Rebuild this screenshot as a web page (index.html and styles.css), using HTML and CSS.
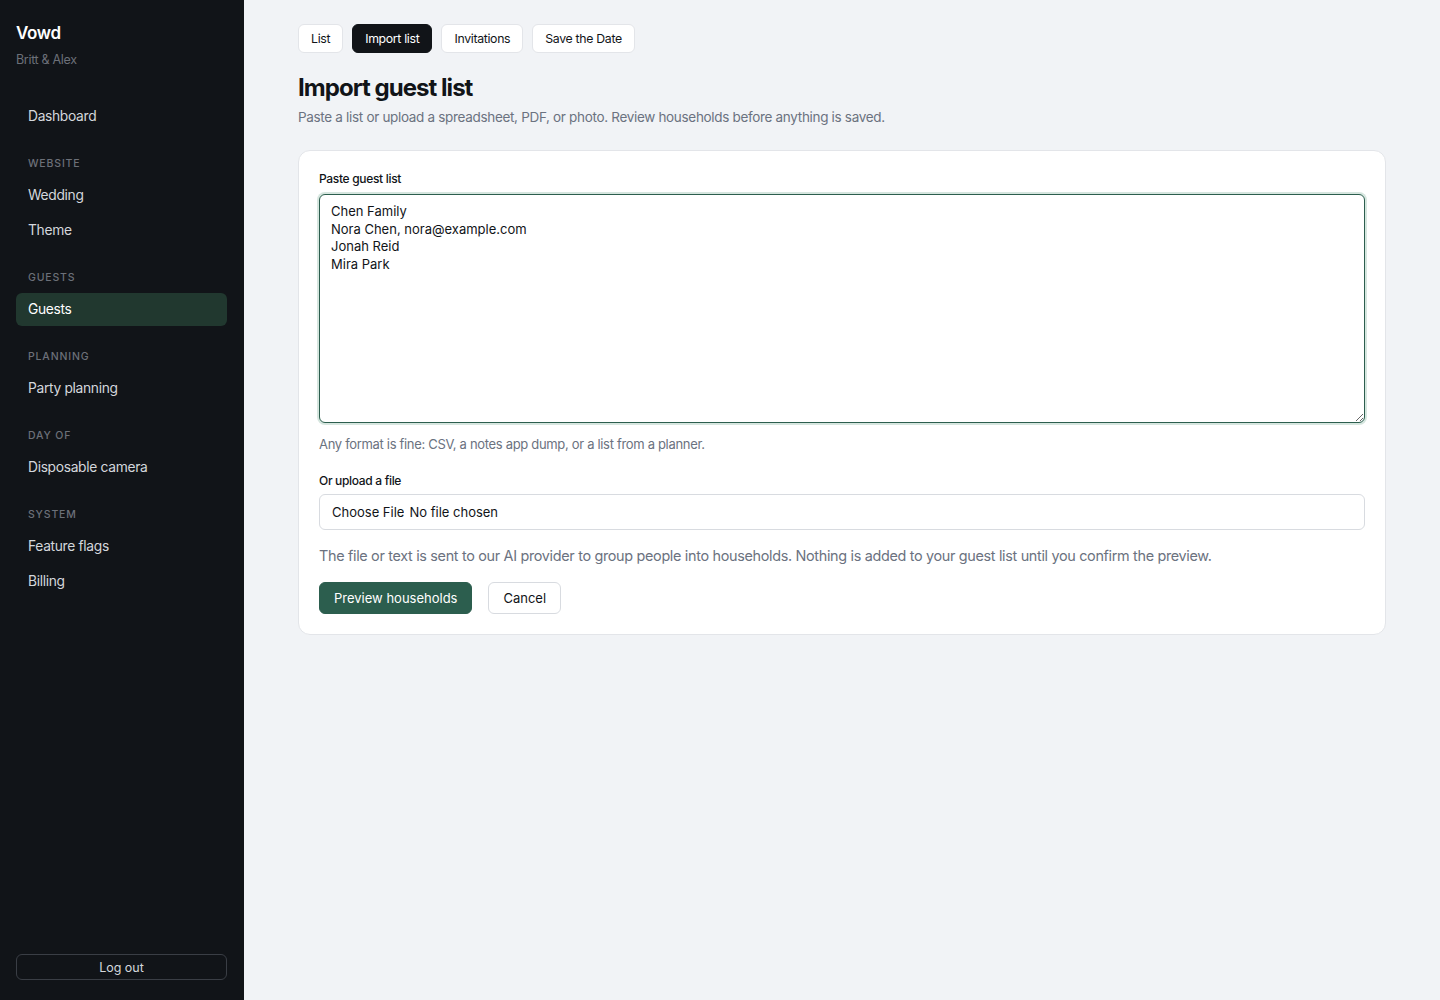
FILE: index.html
```html
<!DOCTYPE html>
<html lang="en">
  <head>
    <meta charset="UTF-8" />
    <title>Import guest list · Vowd</title>
    <meta name="viewport" content="width=device-width, initial-scale=1" />
    <link rel="stylesheet" href="styles.css">
  </head>
  <body>
    <div class="shell">
      <aside class="sidebar">
        <div class="brand">
          <div class="brand-name">Vowd</div>
          <div class="brand-sub">Britt &amp; Alex</div>
        </div>

        <nav class="nav">
          <a class="nav-item" href="#">Dashboard</a>

          <div class="nav-group">
            <div class="nav-label">Website</div>
            <a class="nav-item" href="#">Wedding</a>
            <a class="nav-item" href="#">Theme</a>
          </div>

          <div class="nav-group">
            <div class="nav-label">Guests</div>
            <a class="nav-item active" href="#">Guests</a>
          </div>

          <div class="nav-group">
            <div class="nav-label">Planning</div>
            <a class="nav-item" href="#">Party planning</a>
          </div>

          <div class="nav-group">
            <div class="nav-label">Day of</div>
            <a class="nav-item" href="#">Disposable camera</a>
          </div>

          <div class="nav-group">
            <div class="nav-label">System</div>
            <a class="nav-item" href="#">Feature flags</a>
            <a class="nav-item" href="#">Billing</a>
          </div>
        </nav>

        <button class="logout">Log out</button>
      </aside>

      <main class="main">
        <div class="tabs">
          <a class="tab" href="#">List</a>
          <a class="tab current" href="#">Import list</a>
          <a class="tab" href="#">Invitations</a>
          <a class="tab" href="#">Save the Date</a>
        </div>

        <h1>Import guest list</h1>
        <p class="lead">
          Paste a list or upload a spreadsheet, PDF, or photo. Review households before anything is saved.
        </p>

        <form class="card">
          <label class="field-label" for="guestText">Paste guest list</label>
          <textarea id="guestText" class="paste" autofocus>Chen Family
Nora Chen, nora@example.com
Jonah Reid
Mira Park</textarea>
          <p class="hint">Any format is fine: CSV, a notes app dump, or a list from a planner.</p>

          <label class="field-label upload-label" for="guestFile">Or upload a file</label>
          <input id="guestFile" class="file" type="file" />

          <p class="note">
            The file or text is sent to our AI provider to group people into households. Nothing is added to your guest list until you confirm the preview.
          </p>

          <div class="actions">
            <button type="button" class="btn btn-primary">Preview households</button>
            <button type="button" class="btn btn-ghost">Cancel</button>
          </div>
        </form>
      </main>
    </div>
  </body>
</html>
```

FILE: styles.css
```css
:root {
  --bg: #f1f3f6;
  --side-bg: #111418;
  --side-text: #d4d7dc;
  --side-muted: #6c7078;
  --active: #21382f;
  --green: #2c5e4e;
  --text: #111418;
  --muted: #6b7280;
  --line: #e3e5e9;
}
* {
  box-sizing: border-box;
}
html,
body {
  height: 100%;
}
body {
  margin: 0;
  font-family: Inter, "Noto Sans", sans-serif;
  letter-spacing: -0.02em;
  background: var(--bg);
  color: var(--text);
}
.shell {
  display: flex;
  min-height: 100vh;
}

/* ---------- Sidebar ---------- */
.sidebar {
  width: 244px;
  flex-shrink: 0;
  background: var(--side-bg);
  color: var(--side-text);
  padding: 22px 17px 20px 16px;
  display: flex;
  flex-direction: column;
}
.brand-name {
  font-size: 17px;
  font-weight: 600;
  color: #fff;
  line-height: 22px;
}
.brand-sub {
  margin-top: 7px;
  font-size: 12.5px;
  color: var(--side-muted);
  line-height: 18px;
}
.nav {
  margin-top: 31px;
  display: flex;
  flex-direction: column;
  gap: 2px;
}
.nav-group {
  display: flex;
  flex-direction: column;
  gap: 2px;
  margin-top: 21px;
}
.nav-label {
  font-size: 10.5px;
  font-weight: 500;
  letter-spacing: 0.08em;
  text-transform: uppercase;
  color: var(--side-muted);
  line-height: 16px;
  padding: 0 12px;
  margin-bottom: 5px;
}
.nav-item {
  display: block;
  height: 33px;
  line-height: 33px;
  padding: 0 12px;
  border-radius: 6px;
  font-size: 13.8px;
  color: var(--side-text);
  text-decoration: none;
}
.nav-item.active {
  background: var(--active);
  color: #fff;
}
.logout {
  margin-top: auto;
  height: 26px;
  border: 1px solid #3a3e45;
  border-radius: 6px;
  background: transparent;
  color: var(--side-text);
  font: inherit;
  font-size: 12.5px;
}

/* ---------- Main ---------- */
.main {
  flex: 1;
  padding: 24px 54px 40px 54px;
}
.tabs {
  display: flex;
  gap: 9px;
}
.tab {
  height: 29px;
  line-height: 27px;
  padding: 0 12px;
  border: 1px solid var(--line);
  border-radius: 6px;
  background: #fff;
  color: var(--text);
  font-size: 12.3px;
  text-decoration: none;
}
.tab.current {
  background: var(--side-bg);
  border-color: var(--side-bg);
  color: #fff;
}
h1 {
  margin: 19px 0 0;
  font-size: 24px;
  font-weight: 700;
  letter-spacing: -0.04em;
  line-height: 32px;
}
.lead {
  margin: 4px 0 0;
  font-size: 13.5px;
  color: var(--muted);
  line-height: 18px;
}

/* ---------- Import form ---------- */
.card {
  margin-top: 24px;
  background: #fff;
  border: 1px solid var(--line);
  border-radius: 12px;
  padding: 20px;
  display: flex;
  flex-direction: column;
}
.field-label {
  font-size: 12px;
  font-weight: 450;
  line-height: 16px;
  color: var(--text);
}
.paste {
  margin-top: 7px;
  height: 229px;
  padding: 8px 11px;
  border: 1px solid var(--green);
  border-radius: 6px;
  box-shadow: 0 0 0 2px #d6e6df;
  font: inherit;
  font-size: 13px;
  line-height: 17.7px;
  color: var(--text);
  resize: vertical;
  outline: none;
}
.hint {
  margin: 12px 0 0;
  font-size: 13px;
  color: var(--muted);
  line-height: 18px;
}
.upload-label {
  margin-top: 20px;
}
.file {
  margin-top: 5px;
  height: 36px;
  padding: 0 12px;
  border: 1px solid #d8dbe0;
  border-radius: 6px;
  font: inherit;
  font-size: 13px;
  color: var(--text);
  line-height: 34px;
}
.file::file-selector-button {
  border: none;
  background: none;
  padding: 0;
  margin-right: 5px;
  font: inherit;
  color: var(--text);
}
.note {
  margin: 16px 0 0;
  font-size: 14.4px;
  color: var(--muted);
  line-height: 20px;
}
.actions {
  margin-top: 16px;
  display: flex;
  gap: 16px;
}
.btn {
  height: 32px;
  padding: 0 14px;
  border-radius: 6px;
  font: inherit;
  font-size: 13px;
  cursor: pointer;
}
.btn-primary {
  background: var(--green);
  border: 1px solid var(--green);
  color: #fff;
}
.btn-ghost {
  background: #fff;
  border: 1px solid #d8dbe0;
  color: var(--text);
}
```
